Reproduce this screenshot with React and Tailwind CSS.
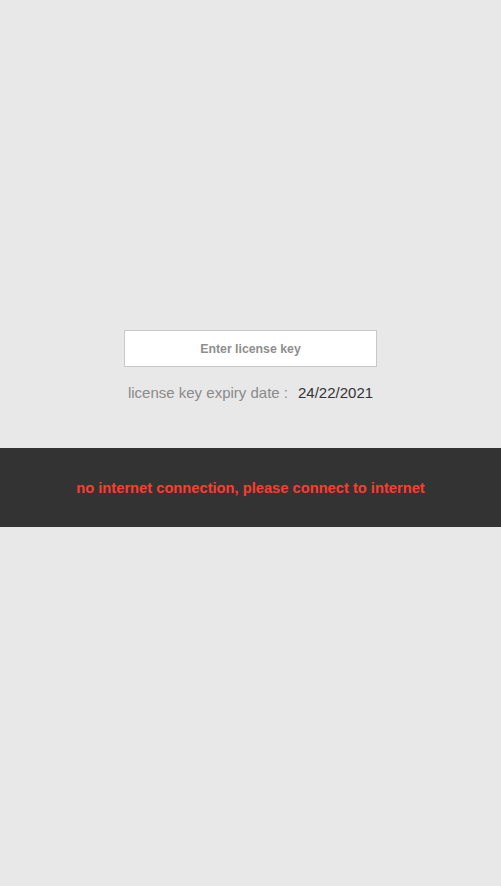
import React from 'react';

const App = () => {
  return (
    <div className="min-h-[886px] bg-[#e8e8e8] flex flex-col" style={{ fontFamily: '"Liberation Sans", Arial, sans-serif' }}>
      <div className="flex flex-col items-center pt-[330px]">
        <input
          type="text"
          placeholder="Enter license key"
          className="w-[253px] h-[37px] bg-white border border-[#c8c8c8] text-center text-[12.3px] font-bold placeholder:text-[#8e8e8e] outline-none"
        />
        <div className="mt-[15px] flex items-center text-[15px] leading-[22px]">
          <span className="text-[#8a8a8a]">license key expiry date :</span>
          <span className="ml-[10px] text-[#333]">24/22/2021</span>
        </div>
      </div>
      <div className="mt-[44px] h-[79px] bg-[#333333] flex items-center justify-center pt-[2px]">
        <span className="text-[#ff3b30] text-[14.7px] font-bold">no internet connection, please connect to internet</span>
      </div>
    </div>
  );
};

export default App;
